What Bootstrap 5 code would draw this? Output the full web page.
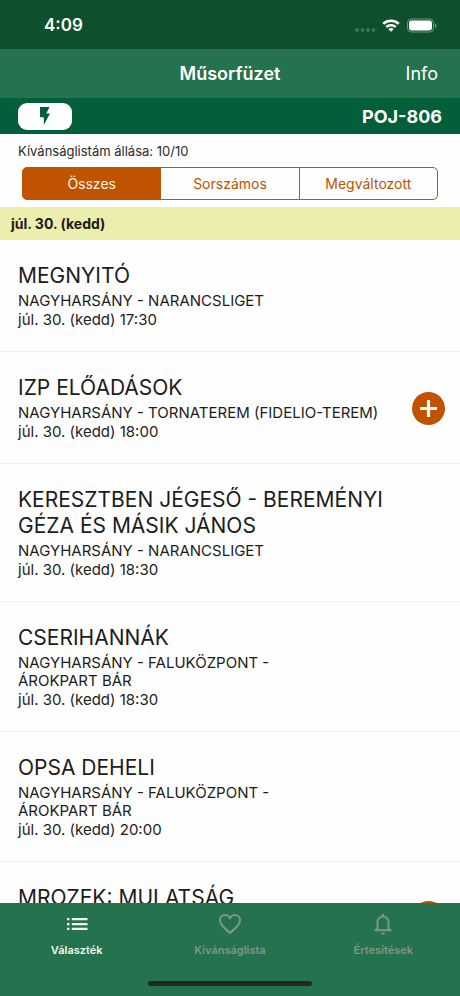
<!DOCTYPE html>
<html lang="hu">
<head>
<meta charset="utf-8">
<meta name="viewport" content="width=device-width, initial-scale=1">
<title>Műsorfüzet</title>
<link href="https://cdn.jsdelivr.net/npm/bootstrap@5.3.0/dist/css/bootstrap.min.css" rel="stylesheet">
<style>
  :root { --pine: #0f502c; --leaf: #24724e; --deep: #025f3a; --rust: #c05200; }
  body { font-family: Inter, "Liberation Sans", sans-serif; color: #1c1c1c; background: #fefefe; }
  svg { display: block; }
  .status-bar { background: var(--pine); height: 49px; padding: 2px 22px 0 44px; font-size: 17px; }
  .title-bar { background: var(--leaf); height: 49px; padding: 0 22px; font-size: 18px; }
  .title-bar h1 { font-size: 18px; }
  .side { flex: 1 1 0; }
  .code-bar { background: var(--deep); height: 36px; padding: 0 18px; font-size: 18px; }
  .flash-btn { width: 54px; height: 27px; border-radius: 9px; }
  .wish-state { font-size: 13px; line-height: 18px; padding: 8px 18px 7px; color: #2b2b2b; }
  .filters { padding: 0 22px 7px; }
  .filters .btn { --bs-btn-color: var(--rust); --bs-btn-border-color: var(--rust);
    --bs-btn-active-bg: var(--rust); --bs-btn-active-border-color: var(--rust); --bs-btn-active-color: #fff4e6;
    --bs-btn-font-size: 14px; --bs-btn-line-height: 20px; --bs-btn-padding-y: 5px; --bs-btn-padding-x: 0;
    --bs-btn-border-radius: 5px; flex: 1 1 0; height: 33px; }
  .day-head { background: #ebeeac; font-size: 14px; line-height: 33px; padding: 0 11px; }
  .programme { overflow-y: auto; scrollbar-width: none; min-height: 0; }
  .programme::-webkit-scrollbar { display: none; }
  .event { padding: 23px 15px 22px 18px; border-bottom: 1px solid #f0f0f0; gap: 26px; }
  .event-text { flex: 1 1 0; }
  .event-text:last-child { margin-right: 59px; }
  .event h2 { font-size: 21px; line-height: 26px; font-weight: 400; margin-bottom: 3px; }
  .venue { font-size: 15px; line-height: 18px; }
  .when { font-size: 15px; line-height: 19px; }
  .add-btn { width: 33px; height: 33px; background: var(--rust); }
  .tab-bar { background: var(--leaf); padding: 10px 0; }
  .tab { color: #7f9885; font-size: 11px; line-height: 14px; gap: 8px; flex: 1 1 0; font-weight: 600; }
  .tab.active { color: #f2faf0; }
  .home-line { width: 164px; height: 5px; background: #222a20; margin-top: 24px; }
</style>
<script src="https://cdn.jsdelivr.net/npm/bootstrap@5.3.0/dist/js/bootstrap.bundle.min.js"></script>
</head>
<body>
<div class="d-flex flex-column vh-100">
  <header>
    <div class="status-bar d-flex align-items-center justify-content-between text-white fw-semibold">
      <span>4:09</span>
      <svg width="84" height="16" viewBox="0 0 84 16" fill="#fff" aria-hidden="true">
        <g fill="#3a7350"><circle cx="3" cy="12" r="2"/><circle cx="8.500" cy="12" r="2"/><circle cx="14" cy="12" r="2"/><circle cx="19.500" cy="12" r="2"/></g>
        <g transform="translate(-2 0)"><g fill="none" stroke="#fff" stroke-width="2.600"><path d="M31.200 5.800a11.600 11.600 0 0 1 15.600 0"/><path d="M34.300 9a7 7 0 0 1 9.400 0"/></g>
        <path d="M39 13.800l-2.600-2.600a3.900 3.900 0 0 1 5.200 0z"/></g>
        <g transform="translate(-1 0)"><rect x="54.500" y="1" width="26" height="13" rx="3.800" fill="none" stroke="#6b9a7c"/>
        <rect x="56" y="2.500" width="23" height="10" rx="2.400"/>
        <path d="M82 5.500v4.500q1.600-.6 1.600-2.250T82 5.500z" fill="#6b9a7c"/></g>
      </svg>
    </div>
    <div class="title-bar d-flex align-items-center text-white">
      <span class="side"></span>
      <h1 class="m-0 fw-semibold">Műsorfüzet</h1>
      <span class="side text-end"><a href="#info" class="text-white text-decoration-none">Info</a></span>
    </div>
    <div class="code-bar d-flex align-items-center justify-content-between text-white fw-bold">
      <button type="button" class="flash-btn btn bg-white p-0 border-0 d-flex align-items-center justify-content-center" aria-label="Villám">
        <svg width="10" height="18" viewBox="0 0 10 18" fill="#025f3a"><path d="M0 0h9.500L6.300 6.500H10L3.800 18V10.300H0z"/></svg>
      </button>
      <span>POJ-806</span>
    </div>
    <div class="wish-state">Kívánságlistám állása: 10/10</div>
    <div class="filters">
      <div class="btn-group d-flex" role="group" aria-label="Szűrő">
        <button type="button" class="btn active" aria-pressed="true">Összes</button>
        <button type="button" class="btn">Sorszámos</button>
        <button type="button" class="btn">Megváltozott</button>
      </div>
    </div>
    <div class="day-head fw-bold">júl. 30. (kedd)</div>
  </header>

  <main class="programme flex-fill">
    <article class="event d-flex align-items-center">
      <div class="event-text"><h2>MEGNYITÓ</h2><div class="venue">NAGYHARSÁNY - NARANCSLIGET</div><div class="when">júl. 30. (kedd) 17:30</div></div>
    </article>
    <article class="event d-flex align-items-center">
      <div class="event-text"><h2>IZP ELŐADÁSOK</h2><div class="venue">NAGYHARSÁNY - TORNATEREM (FIDELIO-TEREM)</div><div class="when">júl. 30. (kedd) 18:00</div></div>
      <button type="button" class="add-btn btn p-0 border-0 rounded-circle d-flex align-items-center justify-content-center" aria-label="Hozzáadás">
        <svg width="17" height="17" viewBox="0 0 17 17" stroke="#fff" stroke-width="3.200"><path d="M8.500 0v17M0 8.500h17"/></svg>
      </button>
    </article>
    <article class="event d-flex align-items-center">
      <div class="event-text"><h2>KERESZTBEN JÉGESŐ - BEREMÉNYI GÉZA ÉS MÁSIK JÁNOS</h2><div class="venue">NAGYHARSÁNY - NARANCSLIGET</div><div class="when">júl. 30. (kedd) 18:30</div></div>
    </article>
    <article class="event d-flex align-items-center">
      <div class="event-text"><h2>CSERIHANNÁK</h2><div class="venue">NAGYHARSÁNY - FALUKÖZPONT - ÁROKPART&nbsp;BÁR</div><div class="when">júl. 30. (kedd) 18:30</div></div>
    </article>
    <article class="event d-flex align-items-center">
      <div class="event-text"><h2>OPSA DEHELI</h2><div class="venue">NAGYHARSÁNY - FALUKÖZPONT - ÁROKPART&nbsp;BÁR</div><div class="when">júl. 30. (kedd) 20:00</div></div>
    </article>
    <article class="event d-flex align-items-center">
      <div class="event-text align-self-start"><h2>MROZEK: MULATSÁG</h2></div>
      <button type="button" class="add-btn btn my-3 p-0 border-0 rounded-circle d-flex align-items-center justify-content-center" aria-label="Hozzáadás">
        <svg width="17" height="17" viewBox="0 0 17 17" stroke="#fff" stroke-width="3.200"><path d="M8.500 0v17M0 8.500h17"/></svg>
      </button>
    </article>
  </main>

  <footer class="tab-bar">
    <nav class="d-flex">
      <a href="#valasztek" class="tab active d-flex flex-column align-items-center text-decoration-none">
        <svg width="22" height="22" viewBox="0 0 22 22" fill="currentColor"><path d="M1 5h2.500v2.300H1zM1 9.900h2.500v2.300H1zM1 14.800h2.500v2.300H1zM5.800 5H21.500v2.300H5.800zM5.800 9.900H21.500v2.300H5.800zM5.800 14.800H21.500v2.300H5.800z"/></svg>
        Választék
      </a>
      <a href="#kivansaglista" class="tab d-flex flex-column align-items-center text-decoration-none">
        <svg width="24" height="22" viewBox="0 0 24 22" fill="none" stroke="currentColor" stroke-width="2"><path d="M12 20C5 14 2 11 2 7a5 5 0 0 1 5-5c2.200 0 4 1.200 5 3 1-1.800 2.800-3 5-3a5 5 0 0 1 5 5c0 4-3 7-10 13z"/></svg>
        Kívánságlista
      </a>
      <a href="#ertesitesek" class="tab d-flex flex-column align-items-center text-decoration-none">
        <svg width="20" height="22" viewBox="0 0 20 22" fill="none" stroke="currentColor" stroke-width="2"><path d="M4.500 17V9a5.500 5.500 0 0 1 11 0v8"/><path d="M1.500 17.300h17M10 3.500V1"/><path d="M2 17l2.500-2.500V17zM18 17l-2.500-2.500V17z" fill="currentColor" stroke="none"/><path d="M8 19.800h4a2 2 0 0 1-4 0z" fill="currentColor" stroke="none"/></svg>
        Értesítések
      </a>
    </nav>
    <div class="home-line rounded-pill mx-auto"></div>
  </footer>
</div>
</body>
</html>
